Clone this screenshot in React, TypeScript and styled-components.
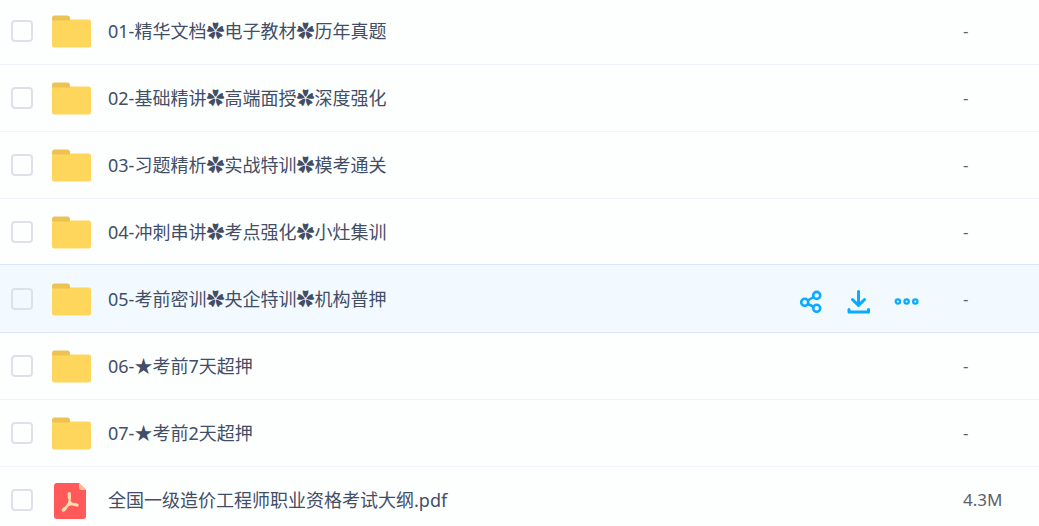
import React from 'react';
import styled, { createGlobalStyle, css } from 'styled-components';

const GlobalStyle = createGlobalStyle`
  body {
    margin: 0;
    background: #fdfefe;
    color: #424e67;
    font-family: 'Noto Sans', 'Noto Sans CJK SC', 'DejaVu Sans', sans-serif;
    font-size: 18px;
  }
`;

const FileList = styled.ul`
  margin: -2px 0 0;
  padding: 0;
  list-style: none;
`;

const Row = styled.li<{ $active?: boolean }>`
  display: flex;
  align-items: center;
  box-sizing: border-box;
  height: 67px;
  padding: 2px 0 0 11px;
  border-bottom: 1px solid #f0f4fb;
  ${({ $active }) =>
    $active &&
    css`
      height: 69px;
      margin: -2px 0 0;
      background: #f3faff;
      border-top: 1px solid #d9e6f3;
      border-bottom-color: #d9e6f3;
    `}
`;

const Check = styled.input`
  appearance: none;
  flex: none;
  box-sizing: border-box;
  width: 22px;
  height: 22px;
  margin: 0 18px 2px 0;
  border: 2px solid #dfe1e9;
  border-radius: 4px;
  background: transparent;
  &:checked {
    background: #09aaff;
  }
`;

const IconSlot = styled.span`
  display: flex;
  flex: none;
  justify-content: center;
  width: 41px;
  margin-right: 16px;
`;

const Name = styled.label`
  flex: 1;
  min-width: 0;
  overflow: hidden;
  white-space: nowrap;
  text-overflow: ellipsis;
  line-height: 26px;
  padding-bottom: 2px;
`;

const Actions = styled.div`
  display: flex;
  gap: 20px;
  margin: 4px 42px 0 0;
`;

const ActionButton = styled.button`
  display: flex;
  padding: 0;
  border: 0;
  background: none;
  color: #09aaff;
  cursor: pointer;
`;

const Size = styled.span`
  flex: none;
  width: 76px;
  color: #5f6068;
  font-size: 17px;
  line-height: 26px;
  padding-bottom: 2px;
`;

const FolderIcon = () => (
  <svg width="41" height="34" viewBox="0 0 41 34" aria-hidden="true">
    <rect x="1" y="4.500" width="39" height="28" rx="2.500" fill="#ffd65c" />
    <path d="M1 5.500V3q0-2.500 2-2.500h13q3 0 3 3v2z" fill="#ecc252" />
  </svg>
);

const PdfIcon = () => (
  <svg width="36" height="36" viewBox="0 0 36 36" aria-hidden="true">
    <path d="M3 0h22l7 7v26a3 3 0 0 1-3 3H3a3 3 0 0 1-3-3V3a3 3 0 0 1 3-3z" fill="#ff5959" />
    <path d="M25 0l7 7h-5q-2 0-2-2z" fill="#ffbd94" />
    <g fill="none" stroke="#ffdfb3" strokeLinecap="round" strokeLinejoin="round">
      <path d="M15.300 10.500V14.500" strokeWidth="3.200" />
      <path d="M15.300 13Q16.300 17.500 15 20Q13 24 9.500 27" strokeWidth="2.200" />
      <path d="M11 25.500L9.500 27" strokeWidth="3.400" />
      <path d="M15.500 18.500Q18 22 23 22" strokeWidth="2.200" />
      <path d="M21 21.500L23 22" strokeWidth="3.200" />
      <path d="M12.500 23.500Q16 20.500 20 21.500" strokeWidth="2" />
    </g>
  </svg>
);

const ShareIcon = () => (
  <svg width="28" height="28" viewBox="0 0 28 28" fill="none" stroke="currentColor" strokeWidth="2.600" aria-hidden="true">
    <circle cx="7.700" cy="14.300" r="3.500" />
    <circle cx="19.700" cy="7.400" r="3.500" />
    <circle cx="19.700" cy="20.300" r="3.500" />
    <path d="M10.700 12.500l6-3.500M10.700 16l6 2.800" />
  </svg>
);

const DownloadIcon = () => (
  <svg width="28" height="28" viewBox="0 0 28 28" fill="none" stroke="currentColor" strokeWidth="3" strokeLinecap="round" strokeLinejoin="round" aria-hidden="true">
    <path d="M13.500 3.500v14M7.500 11.500l6 6 6-6M4 21.500v2.500h19.500v-2.500" />
  </svg>
);

const MoreIcon = () => (
  <svg width="28" height="28" viewBox="0 0 28 28" fill="none" stroke="currentColor" strokeWidth="2.200" aria-hidden="true">
    <circle cx="4.900" cy="13.500" r="2.200" />
    <circle cx="13.600" cy="13.500" r="2.200" />
    <circle cx="22.300" cy="13.500" r="2.200" />
  </svg>
);

interface FileEntry {
  name: string;
  size: string;
  kind: 'folder' | 'pdf';
  active?: boolean;
}

const files: FileEntry[] = [
  { name: '01-精华文档✿电子教材✿历年真题', size: '-', kind: 'folder' },
  { name: '02-基础精讲✿高端面授✿深度强化', size: '-', kind: 'folder' },
  { name: '03-习题精析✿实战特训✿模考通关', size: '-', kind: 'folder' },
  { name: '04-冲刺串讲✿考点强化✿小灶集训', size: '-', kind: 'folder' },
  { name: '05-考前密训✿央企特训✿机构普押', size: '-', kind: 'folder', active: true },
  { name: '06-★考前7天超押', size: '-', kind: 'folder' },
  { name: '07-★考前2天超押', size: '-', kind: 'folder' },
  { name: '全国一级造价工程师职业资格考试大纲.pdf', size: '4.3M', kind: 'pdf' },
];

export default function App() {
  return (
    <>
      <GlobalStyle />
      <FileList>
        {files.map((file, i) => (
          <Row key={file.name} $active={file.active}>
            <Check type="checkbox" id={`file-${i}`} />
            <IconSlot>{file.kind === 'folder' ? <FolderIcon /> : <PdfIcon />}</IconSlot>
            <Name htmlFor={`file-${i}`}>{file.name}</Name>
            {file.active && (
              <Actions>
                <ActionButton type="button" aria-label="分享"><ShareIcon /></ActionButton>
                <ActionButton type="button" aria-label="下载"><DownloadIcon /></ActionButton>
                <ActionButton type="button" aria-label="更多"><MoreIcon /></ActionButton>
              </Actions>
            )}
            <Size>{file.size}</Size>
          </Row>
        ))}
      </FileList>
    </>
  );
}
